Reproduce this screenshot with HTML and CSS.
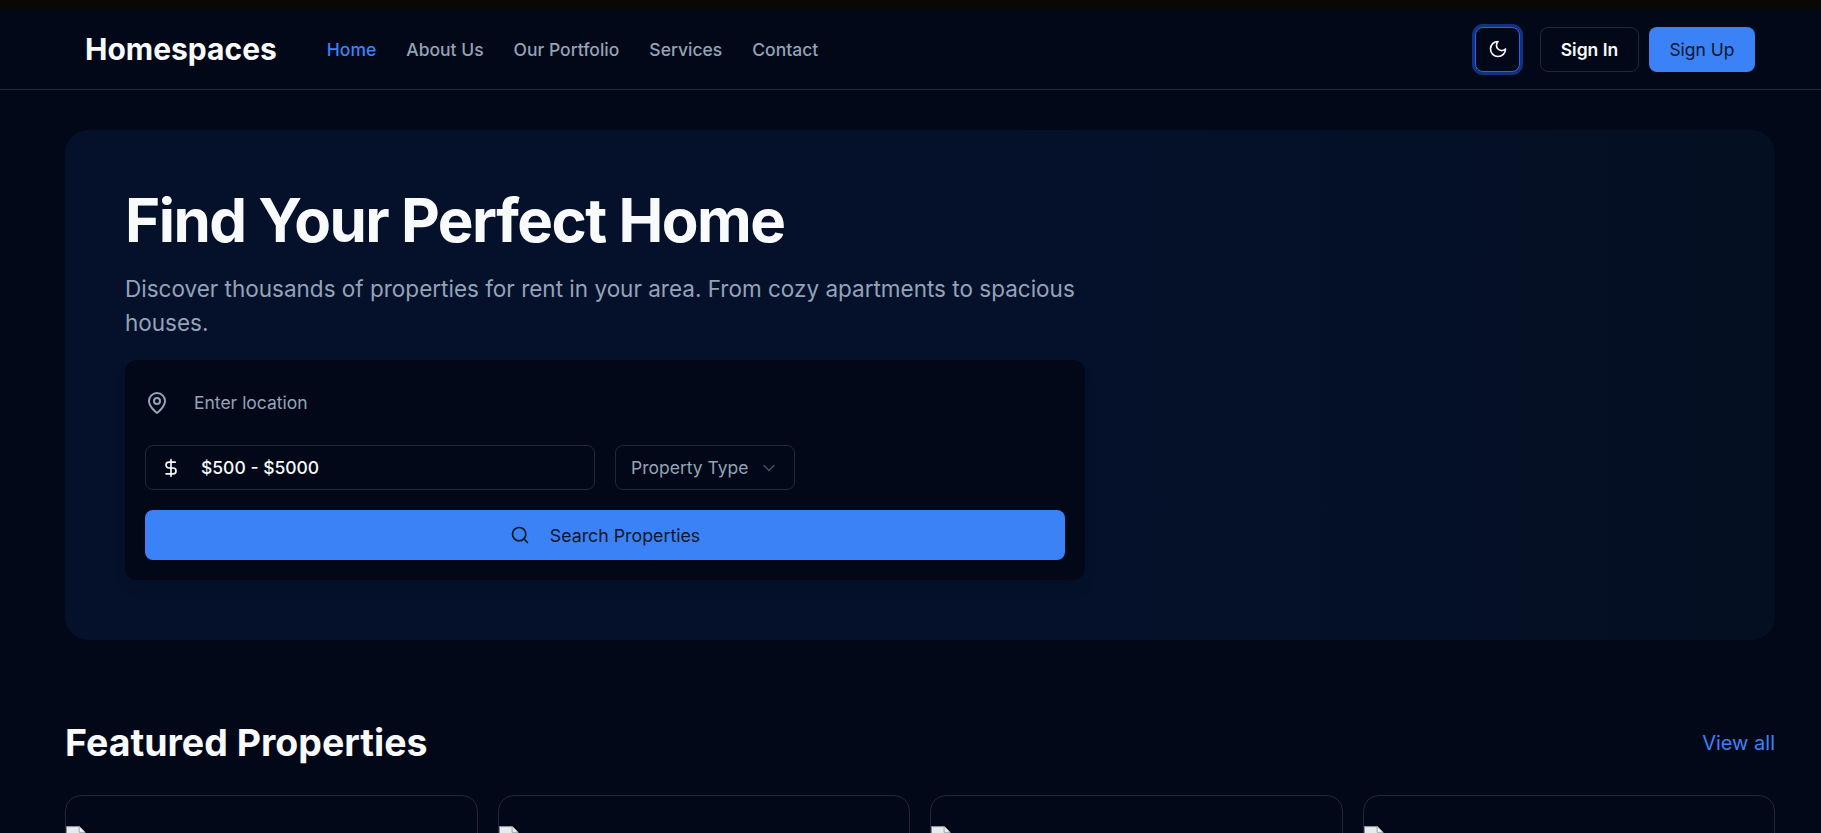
FILE: index.html
```html
<!DOCTYPE html>
<html lang="en">
<head>
<meta charset="utf-8">
<title>Homespaces</title>
<link rel="stylesheet" href="styles.css">
</head>
<body>
<div class="topstrip"></div>
<header class="navbar">
  <div class="nav-left">
    <a class="logo">Homespaces</a>
    <nav class="nav-links">
      <a class="active">Home</a>
      <a>About Us</a>
      <a>Our Portfolio</a>
      <a>Services</a>
      <a>Contact</a>
    </nav>
  </div>
  <div class="nav-right">
    <button class="btn theme">
      <svg class="ic20" viewBox="0 0 24 24"><path d="M12 3a6 6 0 0 0 9 9 9 9 0 1 1-9-9Z"/></svg>
    </button>
    <button class="btn outline">Sign In</button>
    <button class="btn primary">Sign Up</button>
  </div>
</header>
<main class="page">
  <section class="hero">
    <h1>Find Your Perfect Home</h1>
    <p>Discover thousands of properties for rent in your area. From cozy apartments to spacious houses.</p>
    <div class="search">
      <div class="loc">
        <svg class="ic24 muted" viewBox="0 0 24 24"><path d="M20 10c0 6-8 12-8 12s-8-6-8-12a8 8 0 0 1 16 0Z"/><circle cx="12" cy="10" r="3"/></svg>
        <span>Enter location</span>
      </div>
      <div class="filters">
        <div class="price">
          <svg class="ic20 white" viewBox="0 0 24 24"><line x1="12" y1="2" x2="12" y2="22"/><path d="M17 5H9.5a3.5 3.5 0 0 0 0 7h5a3.5 3.5 0 0 1 0 7H6"/></svg>
          <span>$500 - $5000</span>
        </div>
        <div class="select">
          <span>Property Type</span>
          <svg class="ic20 chev" viewBox="0 0 24 24"><path d="m6 9 6 6 6-6"/></svg>
        </div>
      </div>
      <button class="go">
        <svg class="ic20 dark" viewBox="0 0 24 24"><circle cx="11" cy="11" r="8"/><path d="m21 21-4.3-4.3"/></svg>
        <span>Search Properties</span>
      </button>
    </div>
  </section>
  <section class="featured">
    <div class="feat-head">
      <h2>Featured Properties</h2>
      <a class="viewall">View all</a>
    </div>
    <div class="cards">
      <article class="card"><svg class="broken" viewBox="0 0 16 16"><path class="pg" d="M.5.500h10l4.500 4.500v10.500H.5Z"/><path class="fold" d="M10.500.5V5H15Z"/><path class="hill" d="M2.500 12l3-3.500 2 2 2-1.500 2.500 3Z"/></svg></article>
      <article class="card"><svg class="broken" viewBox="0 0 16 16"><path class="pg" d="M.5.500h10l4.500 4.500v10.500H.5Z"/><path class="fold" d="M10.500.5V5H15Z"/><path class="hill" d="M2.500 12l3-3.500 2 2 2-1.500 2.500 3Z"/></svg></article>
      <article class="card"><svg class="broken" viewBox="0 0 16 16"><path class="pg" d="M.5.500h10l4.500 4.500v10.500H.5Z"/><path class="fold" d="M10.500.5V5H15Z"/><path class="hill" d="M2.500 12l3-3.500 2 2 2-1.500 2.500 3Z"/></svg></article>
      <article class="card"><svg class="broken" viewBox="0 0 16 16"><path class="pg" d="M.5.500h10l4.500 4.500v10.500H.5Z"/><path class="fold" d="M10.500.5V5H15Z"/><path class="hill" d="M2.500 12l3-3.500 2 2 2-1.500 2.500 3Z"/></svg></article>
    </div>
  </section>
</main>
</body>
</html>
```
FILE: styles.css
```css
* { box-sizing: border-box; }
html, body { margin: 0; padding: 0; height: 833px; overflow: hidden; }
body { background: #020817; color: #f8fafc; font-family: Inter, "Liberation Sans", sans-serif; }
svg { fill: none; stroke: currentColor; stroke-width: 2; stroke-linecap: round; stroke-linejoin: round; flex: none; }
button { font-family: inherit; cursor: pointer; }
.topstrip { height: 9px; background: #0a0805; }
.navbar { height: 81px; border-bottom: 1px solid #1e293b; padding: 0 66px 0 85px; display: flex; align-items: center; justify-content: space-between; }
.nav-left { display: flex; align-items: center; gap: 50px; }
.logo { font-size: 30px; font-weight: 700; color: #f8fafc; }
.nav-links { display: flex; gap: 30px; font-size: 17.5px; font-weight: 500; color: #94a3b8; }
.nav-links .active { color: #3b82f6; }
.nav-right { display: flex; align-items: center; gap: 10px; }
.btn { height: 45px; border-radius: 8px; font-size: 17.5px; font-weight: 500; display: flex; align-items: center; justify-content: center; }
.theme { width: 45px; margin-right: 10px; background: #020817; border: 1px solid #2563eb; color: #f8fafc; box-shadow: 0 0 0 3px #11337f; }
.outline { width: 99px; background: #020817; border: 1px solid #1e293b; color: #f8fafc; font-weight: 600; }
.primary { width: 106px; background: #3b82f6; border: 0; color: #0f172a; font-weight: 400; }
.ic20 { width: 20px; height: 20px; }
.ic24 { width: 24px; height: 24px; }
.page { padding: 40px 46px 0 65px; }
.hero { height: 510px; border-radius: 24px; background: linear-gradient(90deg, #05112b 0%, #05112b 55%, #040f22 100%); padding: 60px; }
h1 { margin: 0; font-size: 60px; line-height: 60px; font-weight: 700; letter-spacing: -1.5px; color: #f8fafc; }
.hero p { margin: 22px 0 0; width: 960px; font-size: 22.5px; line-height: 34px; color: #94a3b8; }
.search { margin-top: 20px; width: 960px; height: 220px; background: #020817; border-radius: 12px; padding: 20px; display: flex; flex-direction: column; box-shadow: 0 10px 15px -3px rgba(0, 0, 0, 0.1); }
.loc { height: 45px; display: flex; align-items: center; gap: 25px; font-size: 17.5px; color: #94a3b8; }
.muted { color: #94a3b8; }
.filters { margin-top: 20px; display: flex; gap: 20px; }
.price { width: 450px; height: 45px; border: 1px solid #1e293b; border-radius: 8px; display: flex; align-items: center; gap: 20px; padding-left: 15px; font-size: 17.5px; font-weight: 500; color: #f8fafc; }
.select { width: 180px; height: 45px; border: 1px solid #1e293b; border-radius: 8px; display: flex; align-items: center; justify-content: space-between; padding: 0 15px; font-size: 17.5px; color: #94a3b8; }
.chev { color: #475569; stroke-width: 1.5; }
.go { margin-top: 20px; height: 50px; border: 0; border-radius: 8px; background: #3b82f6; color: #0f172a; display: flex; align-items: center; justify-content: center; gap: 20px; font-size: 17.8px; font-weight: 400; }
.featured { margin-top: 80px; }
.feat-head { display: flex; align-items: center; justify-content: space-between; height: 45px; }
h2 { margin: 0; font-size: 37.5px; font-weight: 700; color: #f8fafc; }
.viewall { font-size: 20px; color: #3b82f6; }
.cards { margin-top: 30px; display: grid; grid-template-columns: repeat(4, 1fr); gap: 20px; }
.card { height: 300px; border: 1px solid #1e293b; border-radius: 16px; padding-top: 30px; }
.broken { display: block; width: 20px; height: 20px; stroke: none; }
.pg { fill: #e8eaed; stroke: #9aa0a6; stroke-width: 0.8; }
.fold { fill: #fff; stroke: #9aa0a6; stroke-width: 0.8; }
.hill { fill: #6fa05a; }
```
